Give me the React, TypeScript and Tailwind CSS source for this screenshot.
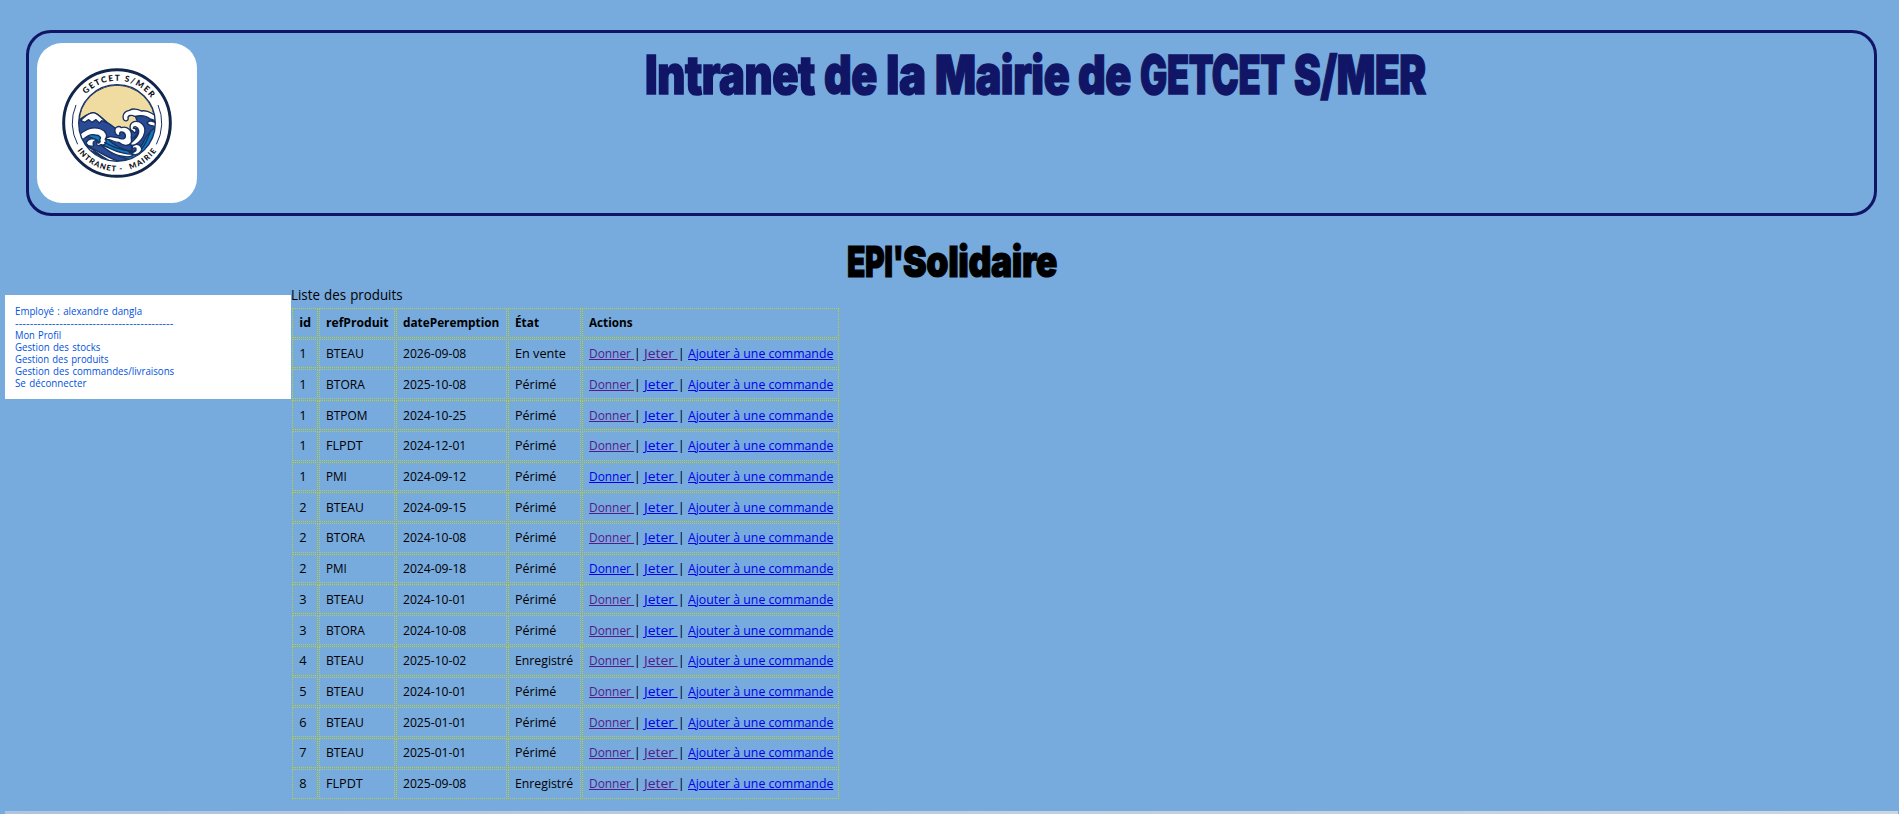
import { useLayoutEffect, useRef, useState } from "react";
import type { ReactNode } from "react";

type FitProps = { w: number; children: ReactNode; className?: string };

/* Condenses or widens a run of text so that it fills exactly w pixels. */
function Fit({ w, children, className = "" }: FitProps) {
  const ref = useRef<HTMLSpanElement>(null);
  const [scale, setScale] = useState(1);
  useLayoutEffect(() => {
    if (ref.current) setScale(w / ref.current.offsetWidth);
  }, [w]);
  return (
    <span className="inline-block whitespace-pre text-left" style={{ width: w }}>
      <span
        ref={ref}
        className={`inline-block origin-left whitespace-pre ${className}`}
        style={{ transform: `scaleX(${scale})` }}
      >
        {children}
      </span>
    </span>
  );
}

const refWidths: Record<string, number> = { BTEAU: 38, BTORA: 38.5, BTPOM: 41, FLPDT: 36.5, PMI: 21 };
const stateWidths: Record<string, number> = { "En vente": 50.5, "Périmé": 41, "Enregistré": 58.5 };

type Row = [string, string, string, string, boolean, boolean];

/* id, reference, expiry date, state, "Donner" visited, "Jeter" visited */
const rows: Row[] = [
  ["1", "BTEAU", "2026-09-08", "En vente", true, true],
  ["1", "BTORA", "2025-10-08", "Périmé", true, false],
  ["1", "BTPOM", "2024-10-25", "Périmé", true, false],
  ["1", "FLPDT", "2024-12-01", "Périmé", true, false],
  ["1", "PMI", "2024-09-12", "Périmé", false, false],
  ["2", "BTEAU", "2024-09-15", "Périmé", true, false],
  ["2", "BTORA", "2024-10-08", "Périmé", true, false],
  ["2", "PMI", "2024-09-18", "Périmé", false, false],
  ["3", "BTEAU", "2024-10-01", "Périmé", true, false],
  ["3", "BTORA", "2024-10-08", "Périmé", true, false],
  ["4", "BTEAU", "2025-10-02", "Enregistré", true, true],
  ["5", "BTEAU", "2024-10-01", "Périmé", true, false],
  ["6", "BTEAU", "2025-01-01", "Périmé", true, false],
  ["7", "BTEAU", "2025-01-01", "Périmé", true, true],
  ["8", "FLPDT", "2025-09-08", "Enregistré", true, true],
];

const headings: [string, number][] = [
  ["id", 12],
  ["refProduit", 62.5],
  ["datePeremption", 96],
  ["État", 24],
  ["Actions", 44],
];

const menu: [string, number][] = [
  ["Employé : alexandre dangla", 127.5],
  ["-------------------------------------------", 158],
  ["Mon Profil", 46],
  ["Gestion des stocks", 85],
  ["Gestion des produits", 94],
  ["Gestion des commandes/livraisons", 159],
  ["Se déconnecter", 71.5],
];

const titleWords: [string, number][] = [
  ["Intranet", 170],
  ["de", 53],
  ["la", 40],
  ["Mairie", 134],
  ["de", 53],
  ["GETCET", 145],
  ["S/MER", 132],
];

const cell = "border border-dotted border-[#b9cf35] pb-px pt-0 pl-[6.2px] pr-0 text-left align-middle leading-[16px]";

function Logo() {
  return (
    <svg viewBox="-39 -36 480 480" className="h-[160px] w-[160px] rounded-[25px] bg-white">
      <defs>
        <clipPath id="sea">
          <circle cx="201" cy="204" r="114" />
        </clipPath>
        <path id="arcTop" d="M74 204 A127 127 0 0 1 328 204" />
        <path id="arcBottom" d="M56 204 A145 145 0 0 0 346 204" />
      </defs>
      <circle cx="201" cy="204" r="160" fill="#fff" stroke="#12264b" strokeWidth="9" />
      <g clipPath="url(#sea)" stroke="#16305f" strokeWidth="4" strokeLinejoin="round" strokeLinecap="round">
        <circle cx="201" cy="204" r="114" fill="#f0dba1" />
        <path d="M80 200 C100 188 112 174 130 173 C148 176 160 196 180 208 C200 222 218 238 250 226 L330 180 V330 H80Z" fill="#294b96" />
        <path d="M92 196 C104 186 112 175 130 173 C146 176 155 191 172 204 L155 197 L148 204 L138 194 L126 202 L116 194 L104 202Z" fill="#fff" />
        <path d="M256 184 C286 176 305 190 320 210 L316 300 L250 310 L240 250 C262 250 276 220 256 184Z" fill="#294b96" />
        <path d="M318 182 C300 174 296 164 274 168 C262 160 246 161 238 166 C222 168 216 182 221 194 C226 201 237 196 234 188 C234 180 246 180 254 184 C274 180 292 184 300 192 L320 198Z" fill="#fff" />
        <path d="M291 204 C297 194 309 198 318 204 V220 C306 204 302 220 291 204Z" fill="#fff" />
        <path d="M314 218 C302 228 288 240 280 262 C272 282 252 288 238 296 L290 306 L320 260Z" fill="#1178bd" />
        <path d="M300 234 C292 250 288 268 274 282" fill="none" />
        <path d="M248 228 C238 226 236 206 252 200 C272 196 288 212 284 232 C280 254 266 264 252 272 L238 268 C252 256 268 242 266 226 C264 214 251 212 250 220 C258 218 262 230 254 234Z" fill="#fff" />
        <path d="M88 238 C120 216 150 224 170 248 C188 270 220 286 262 296 L250 318 L150 318 L84 270Z" fill="#1178bd" />
        <path d="M88 246 C120 238 148 258 166 280 C188 300 216 306 238 314 L150 325 L88 280Z" fill="#294b96" />
        <path d="M84 246 C98 226 126 212 152 222 C168 228 174 242 166 252 C172 262 164 274 153 269 C148 276 136 270 140 262 C146 268 154 260 148 254 C156 250 150 240 136 240 C120 236 104 246 96 258Z" fill="#fff" />
        <path d="M108 264 C114 250 130 248 142 256 C130 256 126 264 132 272 C120 276 112 272 108 264Z" fill="#fff" />
        <path d="M196 233 C190 218 206 210 214 218 C232 212 246 226 244 242 C242 248 246 252 244 262 C236 276 218 272 206 262 C190 262 180 250 166 254 C176 238 190 248 204 248 C214 254 228 254 226 240 C222 228 204 228 210 240 C204 244 198 240 196 233Z" fill="#fff" />
        <path d="M150 270 C178 272 190 296 250 298 C246 308 226 306 208 302 C184 298 172 282 150 270Z" fill="#fff" />
        <path d="M110 276 C142 282 156 302 200 316 L184 322 C156 310 142 292 110 282Z" fill="#fff" />
        <path d="M246 280 C246 268 264 264 272 274 C280 284 272 296 256 300 L238 292 C252 294 260 288 258 280 C254 276 250 282 246 280Z" fill="#fff" />
        <path d="M104 270 C132 280 142 300 176 316 M164 262 C190 276 210 286 246 288 M100 280 C120 288 140 304 150 314" fill="none" />
      </g>
      <circle cx="201" cy="204" r="115" fill="none" stroke="#16305f" strokeWidth="4" />
      <path d="M78 150 A135 135 0 0 0 83 268 M324 150 A135 135 0 0 1 319 268" fill="none" stroke="#16305f" strokeWidth="3" />
      <g fill="#0b0f18" fontSize="25" className="font-['Lato'] font-black">
        <text>
          <textPath href="#arcTop" startOffset="94" textLength="224">GETCET S/MER</textPath>
        </text>
        <text fontSize="23">
          <textPath href="#arcBottom" startOffset="88" textLength="156">INTRANET -</textPath>
        </text>
        <text fontSize="23">
          <textPath href="#arcBottom" startOffset="268" textLength="98">MAIRIE</textPath>
        </text>
      </g>
    </svg>
  );
}

function Action({ w, visited, children }: { w: number; visited: boolean; children: string }) {
  return (
    <a href="#" className={visited ? "text-[#551a8b]" : "text-[#0000ee]"}>
      <Fit w={w} className="underline decoration-1 underline-offset-1">{children}</Fit>
    </a>
  );
}

export default function App() {
  return (
    <div className="flex h-[814px] flex-col overflow-hidden bg-[#77aadd] font-['Open_Sans',sans-serif] text-[12.8px] text-black">
      <header className="ml-[26px] mt-[30px] flex h-[186px] w-[1851px] shrink-0 rounded-[25px] border-[3px] border-[#101566] pl-2 pt-[10px]">
        <Logo />
        <h1 className="-mt-px ml-[448px] flex h-[65px] gap-[9px] font-['Inter'] text-[53.5px] font-black leading-[65px] tracking-[-0.5px] text-[#101566] [-webkit-text-stroke:1.5px_#101566]">
          {titleWords.map(([word, w], i) => (
            <Fit key={i} w={w}>{word}</Fit>
          ))}
        </h1>
      </header>

      <h2 className="ml-[846.5px] mt-[22px] flex h-[50px] shrink-0 font-['Inter'] text-[43px] font-black leading-[47px] tracking-[-0.5px] [-webkit-text-stroke:1.2px_black]">
        <Fit w={56.5}>EPI'</Fit>
        <Fit w={154}>Solidaire</Fit>
      </h2>

      <main className="flex h-[523px] shrink-0 pl-[5px]">
        <nav className="mt-[7px] flex h-[104px] w-[286px] flex-col bg-white pl-[10px] pt-[10px] text-[10px] leading-[12px] text-[#0052e0] [word-spacing:0.8px]">
          {menu.map(([label, w]) => (
            <div key={label} className="h-3">
              <Fit w={w}>{label}</Fit>
            </div>
          ))}
        </nav>
        <section className="w-[549px]">
          <p className="h-[19px] text-[14.08px] leading-[14px] [word-spacing:0.8px]">
            <Fit w={111.5}>Liste des produits</Fit>
          </p>
          <table className="w-[549px] table-fixed border-separate border-spacing-[1px]">
            <colgroup>
              <col className="w-[25.8px]" />
              <col className="w-[76.1px]" />
              <col className="w-[111.1px]" />
              <col className="w-[72.9px]" />
              <col className="w-[257.1px]" />
            </colgroup>
            <thead>
              <tr className="h-[29.72px]">
                {headings.map(([label, w]) => (
                  <th key={label} className={cell}>
                    <Fit w={w} className="font-bold">{label}</Fit>
                  </th>
                ))}
              </tr>
            </thead>
            <tbody>
              {rows.map(([id, product, date, state, given, thrown], i) => (
                <tr key={i} className="h-[29.72px]">
                  <td className={cell}><Fit w={7}>{id}</Fit></td>
                  <td className={cell}><Fit w={refWidths[product]}>{product}</Fit></td>
                  <td className={cell}><Fit w={63.5}>{date}</Fit></td>
                  <td className={cell}><Fit w={stateWidths[state]}>{state}</Fit></td>
                  <td className={cell}>
                    <div className="flex">
                      <Action w={44.7} visited={given}>{"Donner "}</Action>
                      <span className="w-[10.3px]">|</span>
                      <Action w={33.7} visited={thrown}>{"Jeter "}</Action>
                      <span className="w-[10.3px]">|</span>
                      <Action w={145} visited={false}>Ajouter à une commande</Action>
                    </div>
                  </td>
                </tr>
              ))}
            </tbody>
          </table>
        </section>
      </main>

      <footer className="ml-[5px] mr-px h-[3px] shrink-0 bg-linear-to-r from-[#afc4de] to-[#ccd6e2]" />
    </div>
  );
}
